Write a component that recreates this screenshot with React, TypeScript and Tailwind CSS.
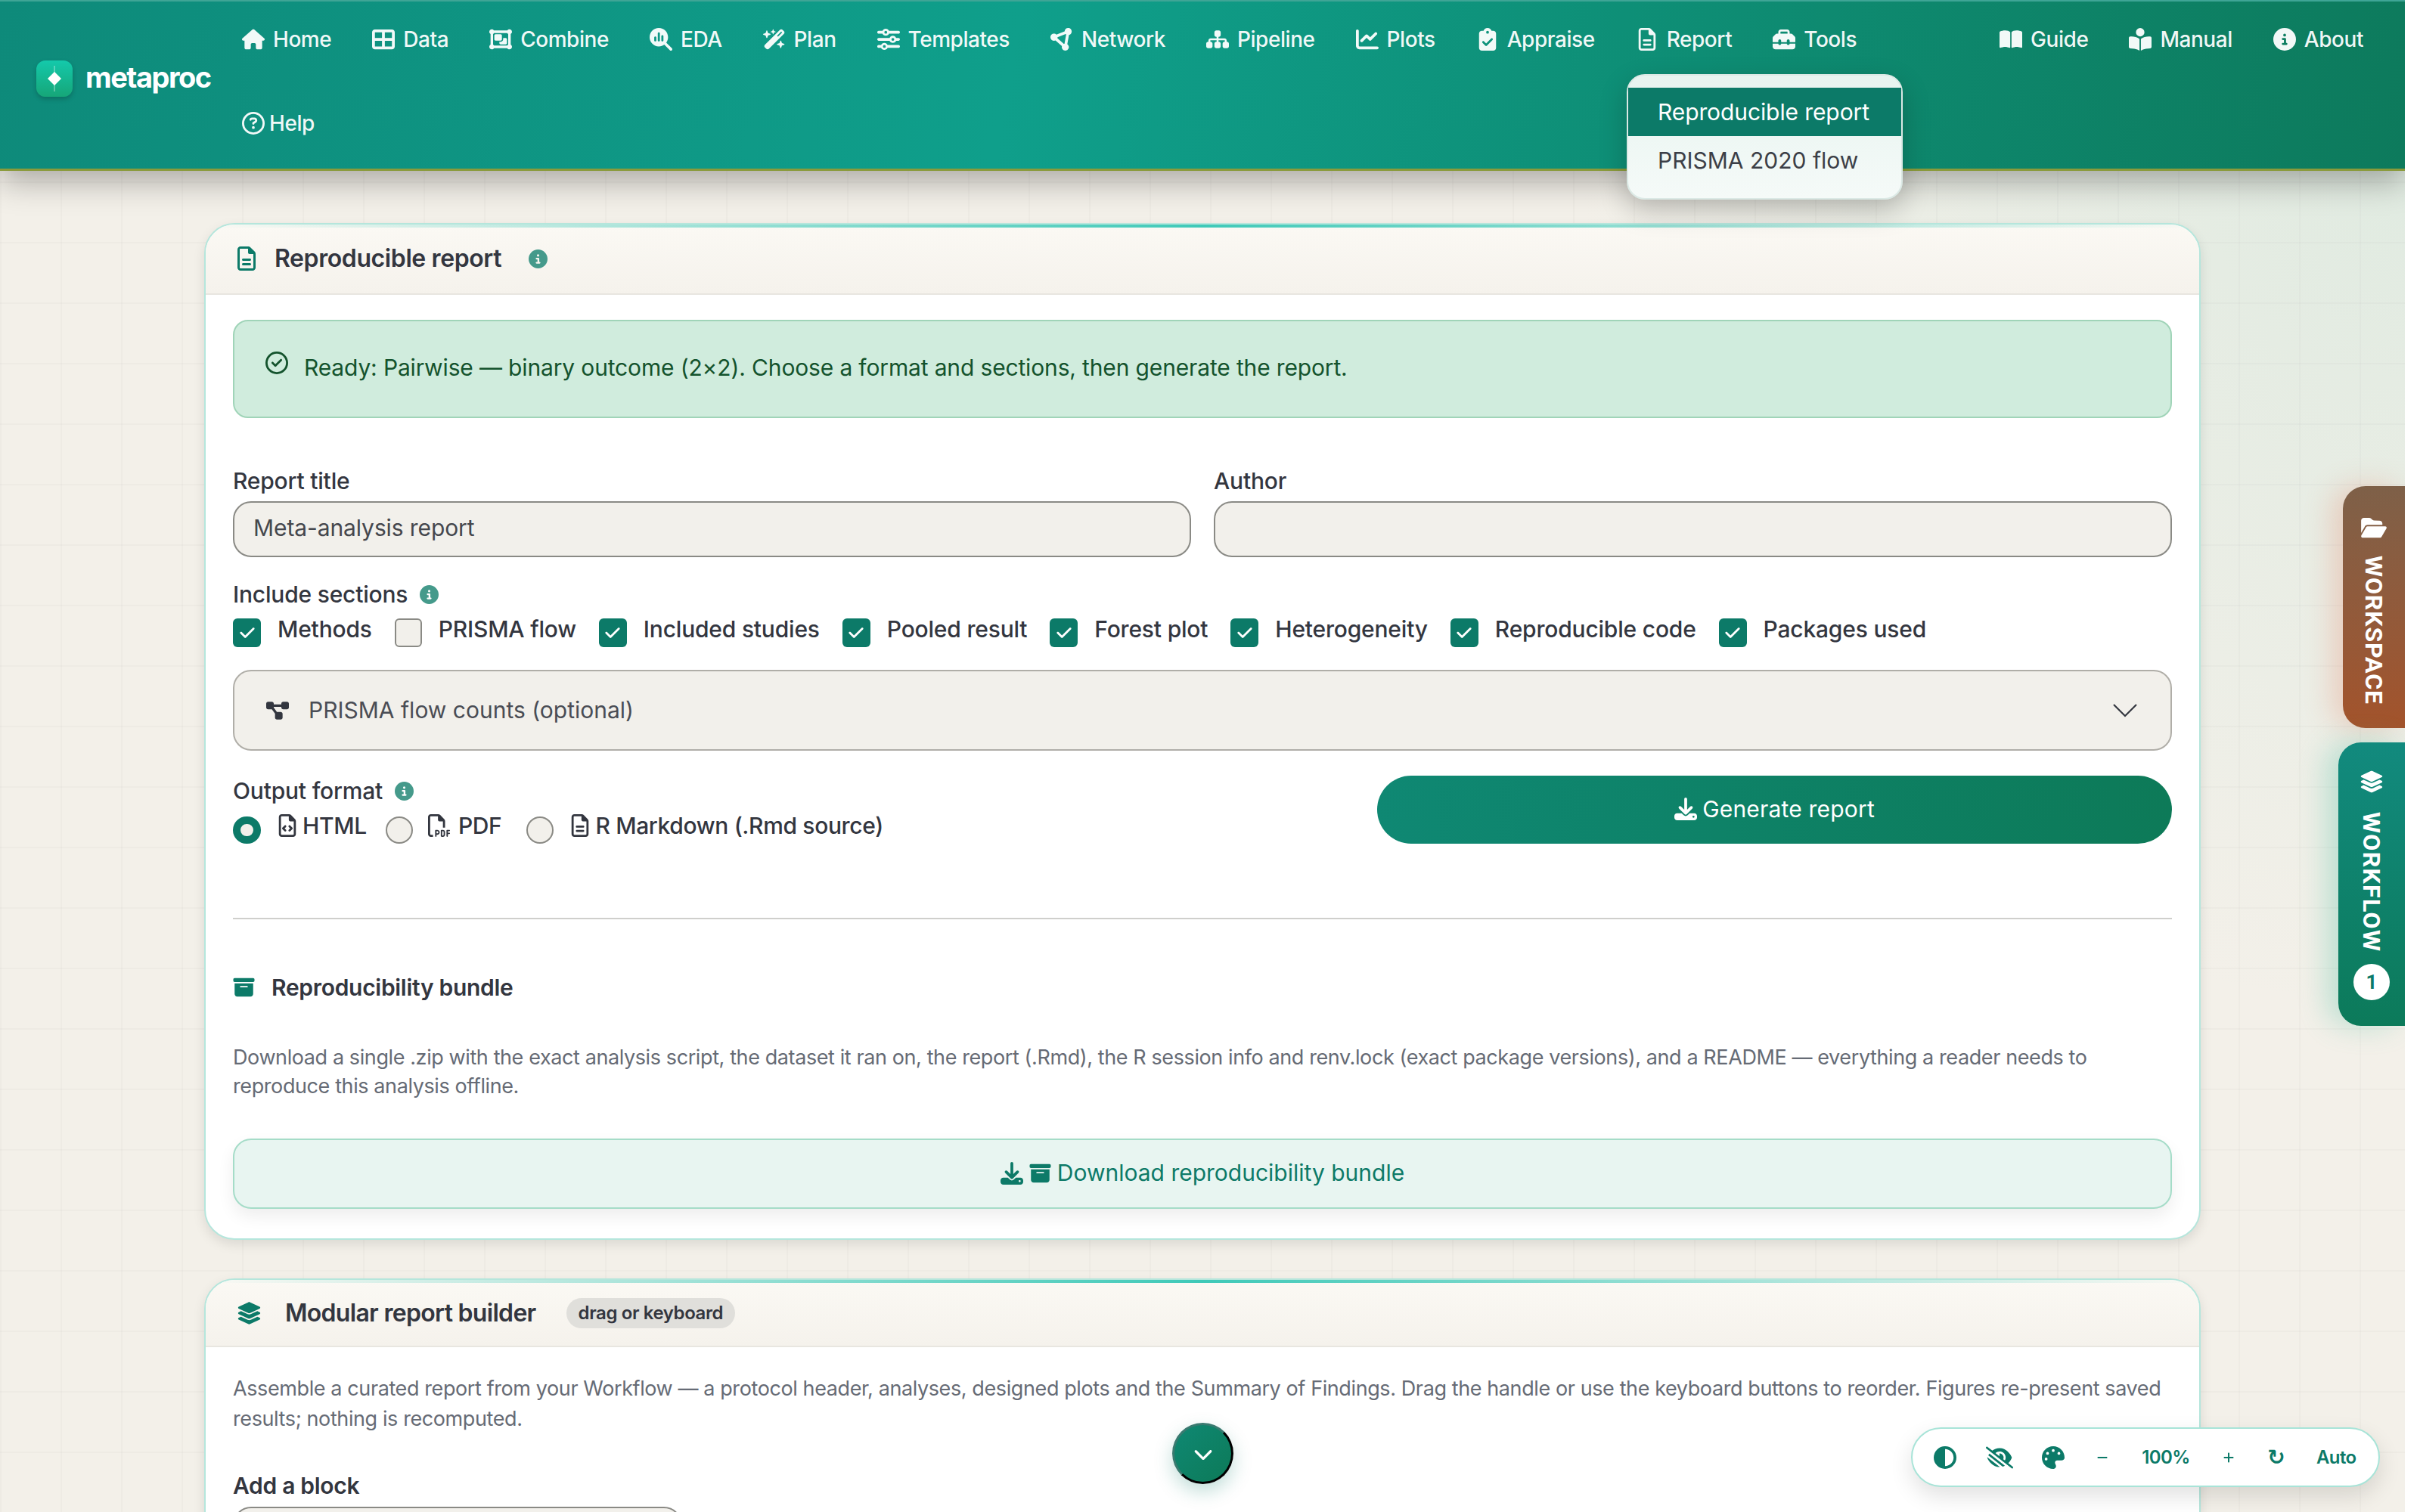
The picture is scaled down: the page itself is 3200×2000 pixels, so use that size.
import type { ReactNode } from 'react'
import {
  FaBookOpen,
  FaBookOpenReader,
  FaBoxArchive,
  FaChartLine,
  FaCheck,
  FaChevronDown,
  FaCircleHalfStroke,
  FaCircleInfo,
  FaCircleNodes,
  FaClipboardCheck,
  FaDiagramProject,
  FaDownload,
  FaEyeLowVision,
  FaFolderOpen,
  FaHouse,
  FaLayerGroup,
  FaMagnifyingGlassChart,
  FaMinus,
  FaObjectGroup,
  FaPalette,
  FaPlus,
  FaRegCircleCheck,
  FaRegCircleQuestion,
  FaRegFileCode,
  FaRegFileLines,
  FaRegFilePdf,
  FaSitemap,
  FaSliders,
  FaTableCellsLarge,
  FaToolbox,
  FaWandMagicSparkles,
} from 'react-icons/fa6'

const navIcon = 'h-[30px] w-auto shrink-0'

const mainNav = [
  { label: 'Home', icon: <FaHouse className={navIcon} /> },
  { label: 'Data', icon: <FaTableCellsLarge className={navIcon} /> },
  { label: 'Combine', icon: <FaObjectGroup className={navIcon} /> },
  { label: 'EDA', icon: <FaMagnifyingGlassChart className={navIcon} /> },
  { label: 'Plan', icon: <FaWandMagicSparkles className={navIcon} /> },
  { label: 'Templates', icon: <FaSliders className={navIcon} /> },
  { label: 'Network', icon: <FaCircleNodes className={navIcon} /> },
  { label: 'Pipeline', icon: <FaSitemap className={navIcon} /> },
  { label: 'Plots', icon: <FaChartLine className={navIcon} /> },
  { label: 'Appraise', icon: <FaClipboardCheck className={navIcon} /> },
  { label: 'Report', icon: <FaRegFileLines className={navIcon} /> },
  { label: 'Tools', icon: <FaToolbox className={navIcon} /> },
  { label: 'Help', icon: <FaRegCircleQuestion className={navIcon} />, labelClass: '-ml-[5px]' },
]

const sideNav = [
  { label: 'Guide', icon: <FaBookOpen className={navIcon} /> },
  { label: 'Manual', icon: <FaBookOpenReader className={navIcon} /> },
  { label: 'About', icon: <FaCircleInfo className={navIcon} /> },
]

const sections = [
  { label: 'Methods', on: true },
  { label: 'PRISMA flow', on: false },
  { label: 'Included studies', on: true },
  { label: 'Pooled result', on: true },
  { label: 'Forest plot', on: true },
  { label: 'Heterogeneity', on: true },
  { label: 'Reproducible code', on: true },
  { label: 'Packages used', on: true },
]

const formats = [
  { label: 'HTML', on: true, gap: 'gap-[5px]', item: '-mr-[5px]', icon: <FaRegFileCode className="h-[30px] w-auto" /> },
  { label: 'PDF', on: false, gap: 'gap-[10px]', item: 'mr-[3px]', icon: <FaRegFilePdf className="h-[30px] w-auto" /> },
  { label: 'R Markdown (.Rmd source)', on: false, gap: 'gap-[5px]', item: '', icon: <FaRegFileLines className="h-[30px] w-auto" /> },
]

function NavItem({ label, icon, labelClass }: { label: string; icon: ReactNode; labelClass?: string }) {
  return (
    <li className="flex h-[70px] items-center gap-[11px] px-[27px] text-[28px] font-medium tracking-[-0.45px] text-white/95">
      {icon}
      <span className={labelClass}>{label}</span>
    </li>
  )
}

function Info() {
  return <FaCircleInfo className="h-[25px] w-[25px] shrink-0 text-[#459a8b]" />
}

function Card({ children, className }: { children: ReactNode; className?: string }) {
  return (
    <section
      className={`relative mx-auto w-[2640px] overflow-hidden rounded-[40px] border-2 border-[#b5e6dc] bg-white shadow-[0_6px_16px_rgba(0,0,0,0.1)] ${className ?? ''}`}
    >
      <div className="absolute inset-x-0 top-0 h-[4px] bg-gradient-to-r from-transparent via-[#3fc9b8] to-transparent" />
      {children}
    </section>
  )
}

export default function App() {
  return (
    <div className="relative h-screen overflow-hidden bg-white font-['Inter',sans-serif] text-[#33363f]">
      <div className="relative h-full w-[3180px] overflow-hidden bg-[#f3f0e9] bg-[radial-gradient(circle_at_100%_12%,rgba(190,225,210,0.35),transparent_30%)]">
        <div className="h-full bg-[linear-gradient(to_right,rgba(0,0,0,0.02)_2px,transparent_2px),linear-gradient(to_bottom,rgba(0,0,0,0.02)_2px,transparent_2px)] bg-[size:80px_80px]">
          {/* Navbar */}
          <header className="relative z-20 flex h-[226px] items-start border-t-2 border-b-[3px] border-t-[#3fa596] border-b-[#8a9a3a] bg-[linear-gradient(100deg,#0e8a7a_0%,#0f9f8b_42%,#0d7a5c_100%)] pl-[48px] pr-[28px] pt-[15px] shadow-[0_14px_40px_rgba(0,0,0,0.3)]">
            <div className="mt-[63px] flex w-[245px] shrink-0 items-center gap-[17px]">
              <div className="relative flex h-[48px] w-[48px] items-center justify-center rounded-[12px] bg-gradient-to-b from-[#14c9ab] to-[#16a678] shadow-[0_3px_6px_rgba(0,0,0,0.2)]">
                <svg viewBox="0 0 48 48" className="h-[48px] w-[48px]">
                  <path d="M24 7v34" stroke="white" strokeWidth="1" opacity="0.6" />
                  <path d="M24 15l9 9-9 9-9-9z" fill="white" />
                </svg>
              </div>
              <span className="-mt-[4px] text-[38px] font-bold leading-[48px] tracking-[-1.5px] text-white">metaproc</span>
            </div>
            <ul className="flex flex-1 flex-wrap gap-y-[41px]">
              {mainNav.map((item) => (
                <NavItem key={item.label} label={item.label} icon={item.icon} labelClass={item.labelClass} />
              ))}
            </ul>
            <ul className="flex shrink-0">
              {sideNav.map((item) => (
                <NavItem key={item.label} label={item.label} icon={item.icon} />
              ))}
            </ul>
          </header>

          {/* Report menu */}
          <div className="absolute left-[2151px] top-[98px] z-30 w-[365px] whitespace-nowrap rounded-[24px] border-2 border-[#dbe9e5] bg-gradient-to-b from-[#e7f4f0] to-[#f5faf8] pb-[18px] pt-[16px] text-[30px] shadow-[0_14px_36px_rgba(0,0,0,0.22)]">
            <div className="flex h-[64px] items-center bg-[#0c7a68] px-[39px] tracking-[-0.1px] text-white">Reproducible report</div>
            <div className="flex h-[64px] items-center px-[39px] text-[#3c3f47]">PRISMA 2020 flow</div>
          </div>

          <main className="pt-[69px]">
            <Card>
              <div className="flex h-[93px] items-center border-b-2 border-[#e8e6e0] bg-gradient-to-b from-[#fbf9f4] to-[#f5f2ec] pb-[1px] pl-[38px]">
                <FaRegFileLines className="h-[32px] w-auto text-[#0c7a68]" />
                <h2 className="ml-[21px] text-[32px] font-semibold tracking-[-0.4px]">Reproducible report</h2>
                <div className="ml-[36px]">
                  <Info />
                </div>
              </div>

              <div className="px-[36px] pb-[39px] pt-[33px]">
                <div className="flex h-[130px] items-start gap-[21px] rounded-[20px] border-2 border-[#a0d4b8] bg-[#d0ecdd] pl-[41px] pt-[39px] text-[#14532d]">
                  <FaRegCircleCheck className="mt-[1px] h-[30px] w-[30px]" />
                  <p className="mt-[4px] text-[30px] leading-[36px] tracking-[-0.15px]">
                    Ready: Pairwise — binary outcome (2×2). Choose a format and sections, then generate the report.
                  </p>
                </div>

                <div className="mt-[65px] grid grid-cols-2 gap-x-[30px]">
                  <div>
                    <label className="block text-[30px] font-medium leading-[36px] tracking-[-0.2px]">Report title</label>
                    <div className="mt-[9px] flex h-[74px] items-center rounded-[24px] border-2 border-[#8a8a85] bg-[#f2f0eb] px-[25px] pb-[4px] text-[30px] tracking-[-0.1px] text-[#45474d]">
                      Meta-analysis report
                    </div>
                  </div>
                  <div>
                    <label className="block text-[30px] font-medium leading-[36px] tracking-[-0.2px]">Author</label>
                    <div className="mt-[9px] h-[74px] rounded-[24px] border-2 border-[#8a8a85] bg-[#f2f0eb]" />
                  </div>
                </div>

                <div className="mt-[31px] flex items-center gap-[16px] text-[30px] font-medium leading-[36px] tracking-[-0.2px]">
                  Include sections
                  <Info />
                </div>
                <div className="mt-[14px] flex gap-x-[30px]">
                  {sections.map((s) => (
                    <div key={s.label} className="flex items-center gap-[22px]">
                      {s.on ? (
                        <span className="flex h-[38px] w-[37px] items-center justify-center rounded-[6px] bg-[#0c7a68] text-white">
                          <FaCheck className="h-[22px] w-[22px]" />
                        </span>
                      ) : (
                        <span className="h-[38px] w-[36px] rounded-[6px] border-2 border-[#8a8a85] bg-[#f2f0eb]" />
                      )}
                      <span className="-mt-[10px] text-[30px] font-medium leading-[38px] tracking-[-0.2px]">{s.label}</span>
                    </div>
                  ))}
                </div>

                <div className="mt-[30px] flex h-[107px] items-center rounded-[24px] border-2 border-[#b0aea8] bg-[#f2f0eb] pl-[42px] pr-[44px] text-[30px] text-[#4a4d55]">
                  <FaDiagramProject className="h-[30px] w-auto text-[#33363f]" />
                  <span className="ml-[26px]">PRISMA flow counts (optional)</span>
                  <svg viewBox="0 0 32 18" fill="none" className="ml-auto h-[18px] w-[32px] stroke-[#33363f]">
                    <path d="M1 1l15 15L31 1" strokeWidth="2.2" />
                  </svg>
                </div>

                <div className="mt-[33px] grid grid-cols-12 gap-x-[30px]">
                  <div className="col-span-7 pt-[2px]">
                    <div className="flex items-center gap-[16px] text-[30px] font-medium leading-[36px] tracking-[-0.2px]">
                      Output format
                      <Info />
                    </div>
                    <div className="mt-[14px] flex gap-x-[30px]">
                      {formats.map((f) => (
                        <div key={f.label} className={`flex items-start gap-[20px] ${f.item}`}>
                          {f.on ? (
                            <span className="mt-[2px] h-[36px] w-[37px] rounded-full border-[10px] border-[#0c7a68] bg-[#f2f0eb]" />
                          ) : (
                            <span className="mt-[2px] h-[36px] w-[36px] rounded-full border-2 border-[#8a8a85] bg-[#f2f0eb]" />
                          )}
                          <span className={`-mt-[5px] flex items-center ${f.gap} text-[30px] font-medium leading-[38px] tracking-[-0.35px]`}>
                            {f.icon}
                            {f.label}
                          </span>
                        </div>
                      ))}
                    </div>
                  </div>
                  <div className="col-span-5">
                    <button className="flex h-[90px] w-full items-center justify-center gap-[7px] rounded-full bg-gradient-to-r from-[#0f8873] to-[#0d7a58] pb-[2px] text-[30px] tracking-[0.2px] text-white">
                      <FaDownload className="h-[30px] w-[30px]" />
                      Generate report
                    </button>
                  </div>
                </div>

                <hr className="mt-[98px] border-t-2 border-[#cfcfcc]" />

                <div className="mt-[72px] flex items-center gap-[22px]">
                  <FaBoxArchive className="h-[28px] w-[29px] text-[#0c7a68]" />
                  <h3 className="text-[30px] font-semibold leading-[36px] tracking-[-0.3px]">Reproducibility bundle</h3>
                </div>
                <p className="mt-[56px] text-[27px] leading-[38px] tracking-[-0.4px] text-[#666b75]">
                  Download a single .zip with the exact analysis script, the dataset it ran on, the report (.Rmd), the R session info and renv.lock (exact package versions), and a README — everything a reader needs to reproduce this analysis offline.
                </p>
                <button className="mt-[50px] flex h-[93px] w-full items-center justify-center gap-[8px] rounded-[24px] border-2 border-[#a5dcc8] bg-[#e8f5f1] pb-[2px] text-[30px] text-[#0d7a68] shadow-[0_10px_22px_rgba(0,0,0,0.07)]">
                  <FaDownload className="h-[30px] w-[30px]" />
                  <FaBoxArchive className="h-[28px] w-[29px]" />
                  Download reproducibility bundle
                </button>
              </div>
            </Card>

            <Card className="mt-[51px]">
              <div className="flex h-[89px] items-center border-b-2 border-[#e8e6e0] bg-gradient-to-b from-[#fbf9f4] to-[#f5f2ec] pl-[41px]">
                <FaLayerGroup className="h-[32px] w-[33px] text-[#0c7a68]" />
                <h2 className="ml-[31px] text-[32px] font-semibold tracking-[-0.7px]">Modular report builder</h2>
                <span className="ml-[40px] flex h-[40px] items-center rounded-full bg-[#e0dfdb] px-[16px] text-[24px] font-semibold tracking-[-0.4px]">drag or keyboard</span>
              </div>
              <div className="px-[36px] pt-[35px]">
                <p className="text-[27px] leading-[40px] tracking-[-0.4px] text-[#666b75]">
                  Assemble a curated report from your Workflow — a protocol header, analyses, designed plots and the Summary of Findings. Drag the handle or use the keyboard buttons to reorder. Figures re-present saved results; nothing is recomputed.
                </p>
                <div className="mt-[50px] text-[30px] font-semibold leading-[36px] tracking-[-0.3px]">Add a block</div>
                <div className="mt-[10px] h-[74px] w-[594px] rounded-[24px] border-2 border-[#8a8a85] bg-[#f2f0eb]" />
              </div>
            </Card>
          </main>
        </div>

        {/* Side tabs */}
        <div className="absolute left-[3098px] top-[643px] flex h-[320px] w-[82px] flex-col items-center rounded-l-[30px] bg-gradient-to-b from-[#7e6048] to-[#a3532b] pt-[40px] text-white shadow-[-14px_0_36px_rgba(230,130,100,0.3)]">
          <FaFolderOpen className="h-[30px] w-[34px]" />
          <span className="mt-[22px] font-['Roboto',sans-serif] text-[32px] font-bold leading-[38px] tracking-[0.9px] [writing-mode:vertical-rl]">WORKSPACE</span>
        </div>
        <div className="absolute left-[3092px] top-[982px] flex h-[375px] w-[88px] flex-col items-center rounded-l-[30px] bg-gradient-to-b from-[#128a7e] to-[#0c7a5a] pt-[36px] text-white shadow-[-16px_0_36px_rgba(70,190,160,0.3)]">
          <FaLayerGroup className="h-[32px] w-[32px]" />
          <span className="mt-[24px] font-['Roboto',sans-serif] text-[32px] font-bold leading-[38px] tracking-[1.3px] [writing-mode:vertical-rl]">WORKFLOW</span>
          <span className="mt-[16px] flex h-[48px] w-[48px] items-center justify-center rounded-full bg-white font-['Roboto',sans-serif] text-[26px] font-bold text-[#0c7a68]">1</span>
        </div>

        {/* Scroll down */}
        <button className="absolute left-[1550px] top-[1882px] flex h-[81px] w-[81px] items-center justify-center rounded-full border-[3px] border-[#3a7a70] border-b-black border-r-black bg-gradient-to-br from-[#0f8873] to-[#0d7a58] text-white shadow-[0_10px_24px_rgba(12,122,104,0.25)]">
          <FaChevronDown className="h-[26px] w-[26px]" />
        </button>

        {/* Accessibility toolbar */}
        <div className="absolute left-[2527px] top-[1888px] flex h-[79px] w-[620px] items-center whitespace-nowrap rounded-full border-2 border-[#a8e4d8] bg-white text-[#0c7a68] shadow-[0_12px_30px_rgba(0,0,0,0.12)]">
          <FaCircleHalfStroke className="ml-[28px] h-[30px] w-[30px]" />
          <FaEyeLowVision className="ml-[39px] h-[32px] w-[36px]" />
          <FaPalette className="ml-[38px] h-[30px] w-[30px]" />
          <FaMinus className="ml-[42px] h-[16px] w-[16px]" />
          <span className="ml-[44px] w-[64px] text-center text-[24px] font-semibold tracking-[-0.6px]">100%</span>
          <FaPlus className="ml-[43px] h-[16px] w-[16px]" />
          <span className="ml-[43px] w-[24px] text-center font-['DejaVu_Sans',sans-serif] text-[28px] font-bold leading-none">↻</span>
          <span className="ml-[41px] text-[24px] font-semibold tracking-[-0.6px]">Auto</span>
        </div>
      </div>
    </div>
  )
}
